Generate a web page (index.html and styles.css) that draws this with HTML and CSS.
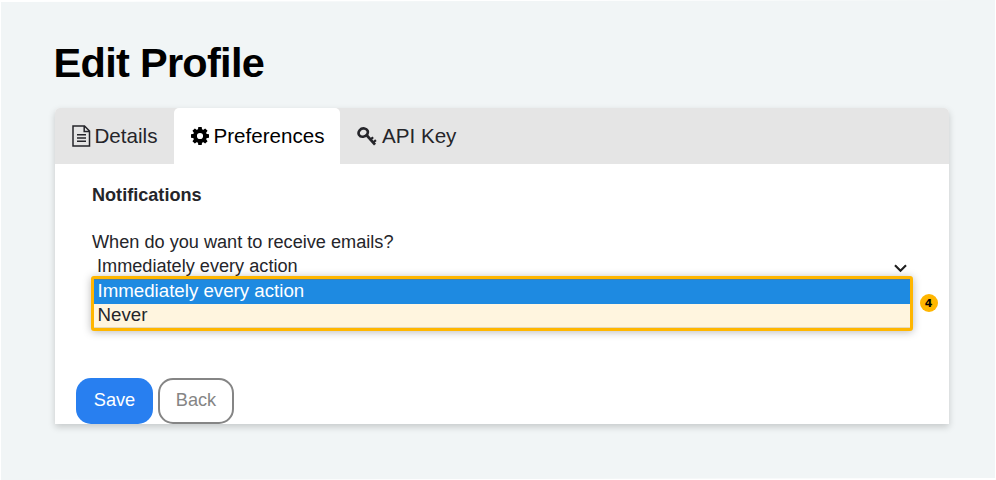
FILE: index.html
```html
<!DOCTYPE html>
<html lang="en">
<head>
<meta charset="utf-8">
<title>Edit Profile</title>
<link rel="stylesheet" href="styles.css">
</head>
<body>
<main class="page">
  <h1 class="title">Edit Profile</h1>
  <section class="card">
    <nav class="tabs">
      <a class="tab tab-details">
        <svg class="icon-file" width="19" height="22" viewBox="0 0 19 22" fill="none" stroke="currentColor" stroke-width="1.500"><path d="M1 1h11.500l5 5v15H1zM12.200 1v5.400h5.300"/><path d="M5 9.800h9M5 13h9M5 16.200h9"/></svg>
        <span>Details</span>
      </a>
      <a class="tab tab-active">
        <svg class="icon-gear" width="18" height="18" viewBox="0 0 18 18"><g fill="currentColor"><path id="tooth" d="M6.800 3.500 7.300 0h3.400l.5 3.500zM6.800 14.500l.5 3.500h3.400l.5-3.500z"/><use href="#tooth" transform="rotate(45 9 9)"/><use href="#tooth" transform="rotate(90 9 9)"/><use href="#tooth" transform="rotate(135 9 9)"/></g><circle cx="9" cy="9" r="5" fill="none" stroke="currentColor" stroke-width="3.800"/></svg>
        <span>Preferences</span>
      </a>
      <a class="tab tab-key">
        <svg class="icon-key" width="20" height="19" viewBox="0 0 20 19" fill="none" stroke="currentColor"><path d="M2 7.800C.4 5 3.500.8 7.400 1.500c3.200.6 4.200 3.300 2.900 5.600C8.700 10 3.800 10.900 2 7.800z" stroke-width="2.600"/><path d="M9.500 8l8.500 9.700" stroke-width="2.700"/><path d="M13.200 12.900l2.900-2.700M15.900 15.800l3-2.700" stroke-width="2.200"/></svg>
        <span>API Key</span>
      </a>
    </nav>
    <div class="panel">
      <h2 class="heading">Notifications</h2>
      <div class="label">When do you want to receive emails?</div>
      <div class="select">
        <span>Immediately every action</span>
        <svg class="chevron" width="13" height="9" viewBox="0 0 13 9" fill="none" stroke="#222" stroke-width="2.200"><path d="M1 1.300l5.500 5.500L12 1.300"/></svg>
      </div>
      <div class="dropdown">
        <div class="option option-selected">Immediately every action</div>
        <div class="option option-never">Never</div>
        <span class="badge">4</span>
      </div>
      <div class="actions">
        <button class="button save">Save</button>
        <button class="button back">Back</button>
      </div>
    </div>
  </section>
</main>
</body>
</html>
```
FILE: styles.css
```css
* { box-sizing: border-box; }
body {
  margin: 0;
  background: #fff;
  font-family: "Liberation Sans", Arial, sans-serif;
  color: #25252a;
}
.page {
  height: 480px;
  padding: 38px 47.500px 0 54.500px;
  background: #f1f5f6;
  clip-path: polygon(1px 2px, 995px 0, 995px 478px, 1px 480px);
}
.title {
  margin: 0 0 0 -1px;
  height: 70px;
  font-size: 41.500px;
  line-height: 50px;
  letter-spacing: -.7px;
  color: #000;
}
.card {
  height: 316px;
  background: #fff;
  border-radius: 5px 5px 0 0;
  box-shadow: 0 3px 7px rgba(0, 0, 0, .18);
}
.tabs {
  display: flex;
  height: 56px;
  background: #e5e5e5;
  border-radius: 5px 5px 0 0;
}
.tab {
  display: flex;
  align-items: center;
  font-size: 20.600px;
  white-space: nowrap;
}
.tab-details {
  width: 119.500px;
  padding-left: 17px;
  gap: 4px;
}
.tab-active {
  width: 166px;
  padding-left: 16.500px;
  gap: 5px;
  color: #000;
  background: #fff;
  border-radius: 5px 5px 0 0;
}
.tab-key {
  padding-left: 17px;
  gap: 5px;
}
.panel { padding: 19px 36px 0 37.500px; }
.heading {
  margin: 0;
  font-size: 18.100px;
  line-height: 24px;
}
.label {
  margin-top: 23px;
  font-size: 18.150px;
  line-height: 24px;
}
.select {
  display: flex;
  justify-content: space-between;
  align-items: center;
  height: 24px;
  padding: 0 5.500px 0 5px;
  font-size: 18.150px;
}
.chevron { margin-top: 4px; }
.dropdown {
  position: relative;
  height: 55px;
  margin: -2px 0 0 -1.500px;
  border: 3px solid #ffb600;
  border-radius: 3px;
  background: #fff5df;
  box-shadow: 0 1px 9px rgba(0, 0, 0, .28);
}
.option {
  height: 24px;
  padding-left: 4px;
  font-size: 18.700px;
  line-height: 23px;
}
.option-selected {
  height: 25px;
  line-height: 21px;
  color: #fff;
  background: #1e8ae1;
  border-top: 1px solid #4a7fa5;
}
.option-never {
  line-height: 22px;
  border-bottom: 1px solid #e3d9c0;
}
.badge {
  position: absolute;
  top: 15px;
  right: -28px;
  width: 18px;
  height: 18px;
  border-radius: 50%;
  background: #ffb600;
  color: #000;
  font: bold 11px/19px "DejaVu Sans", sans-serif;
  text-align: center;
}
.actions {
  display: flex;
  gap: 5px;
  margin: 47px 0 0 -16px;
}
.button {
  height: 46px;
  border: 0;
  border-radius: 15px;
  padding: 0 0 2px;
  font-family: inherit;
  font-size: 18.200px;
}
.save {
  width: 77px;
  color: #fff;
  background: #287ff0;
}
.back {
  width: 76px;
  color: #858585;
  background: #fff;
  border: 2px solid #858585;
}
```
